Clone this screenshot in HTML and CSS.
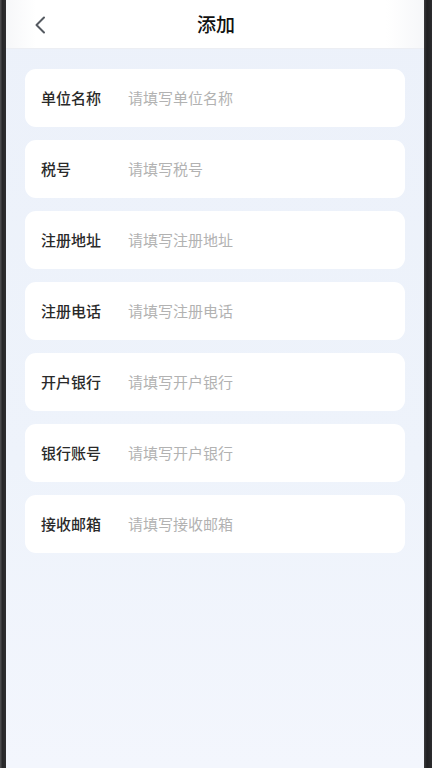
FILE: index.html
```html
<!DOCTYPE html>
<html lang="zh-CN">
<head>
<meta charset="utf-8">
<title>添加</title>
<link rel="stylesheet" href="styles.css">
</head>
<body>
<div class="device">
  <div class="frame-left"></div>
  <div class="screen">
    <header class="nav">
      <span class="back">
        <svg width="12" height="18" viewBox="0 0 12 18"><path d="M10 1.5 L2.5 9 L10 16.5" fill="none" stroke="#555a61" stroke-width="2" stroke-linecap="round" stroke-linejoin="round"/></svg>
      </span>
      <h1 class="title">添加</h1>
    </header>
    <main class="form">
      <label class="row"><span class="label">单位名称</span><input class="field" placeholder="请填写单位名称"></label>
      <label class="row"><span class="label">税号</span><input class="field" placeholder="请填写税号"></label>
      <label class="row"><span class="label">注册地址</span><input class="field" placeholder="请填写注册地址"></label>
      <label class="row"><span class="label">注册电话</span><input class="field" placeholder="请填写注册电话"></label>
      <label class="row"><span class="label">开户银行</span><input class="field" placeholder="请填写开户银行"></label>
      <label class="row"><span class="label">银行账号</span><input class="field" placeholder="请填写开户银行"></label>
      <label class="row"><span class="label">接收邮箱</span><input class="field" placeholder="请填写接收邮箱"></label>
    </main>
  </div>
  <div class="frame-right"></div>
</div>
</body>
</html>
```
FILE: styles.css
```css
* { box-sizing: border-box; }
html, body {
  margin: 0;
  padding: 0;
  width: 432px;
  height: 768px;
  overflow: hidden;
  font-family: "Noto Sans CJK SC", "Noto Sans", sans-serif;
}
.device {
  display: flex;
  width: 432px;
  height: 768px;
  background: #2b2b2d;
}
.frame-left {
  width: 6px;
  background: linear-gradient(90deg, #4a4a4c 0, #4a4a4c 1px, #262628 2px, #2e2e30 100%);
}
.frame-right {
  width: 8px;
  background: linear-gradient(90deg, #3a3a3c 0, #1f1f21 3px, #2c2c2e 100%);
}
.screen {
  flex: 1;
  display: flex;
  flex-direction: column;
  background: linear-gradient(180deg, #ecf1fa 0%, #eef3fb 60%, #f3f6fd 100%);
}
.nav {
  position: relative;
  height: 49px;
  flex: none;
  display: flex;
  align-items: center;
  justify-content: center;
  padding-bottom: 2px;
  background: linear-gradient(90deg, #f6f7f9 0, #ffffff 30px, #ffffff 380px, #f6f7f9 100%);
  border-bottom: 1px solid #eceef3;
}
.back {
  position: absolute;
  left: 28px;
  top: 16px;
  display: flex;
}
.title {
  margin: 0;
  font-size: 19px;
  font-weight: 500;
  color: #111;
  line-height: 1;
  padding-left: 2px;
}
.form {
  display: flex;
  flex-direction: column;
  gap: 13px;
  padding: 20px 19px 0;
}
.row {
  display: flex;
  align-items: center;
  height: 58px;
  padding-left: 16px;
  padding-bottom: 2px;
  background: #ffffff;
  border-radius: 11px;
}
.label {
  width: 87px;
  flex: none;
  font-size: 15px;
  font-weight: 500;
  color: #2a2a2a;
}
.field {
  flex: 1;
  min-width: 0;
  border: 0;
  outline: 0;
  background: transparent;
  padding: 0;
  font-family: "Noto Sans CJK SC", "Noto Sans", sans-serif;
  font-size: 15px;
  color: #333;
}
.field::placeholder {
  color: #b2b2b2;
}
```
